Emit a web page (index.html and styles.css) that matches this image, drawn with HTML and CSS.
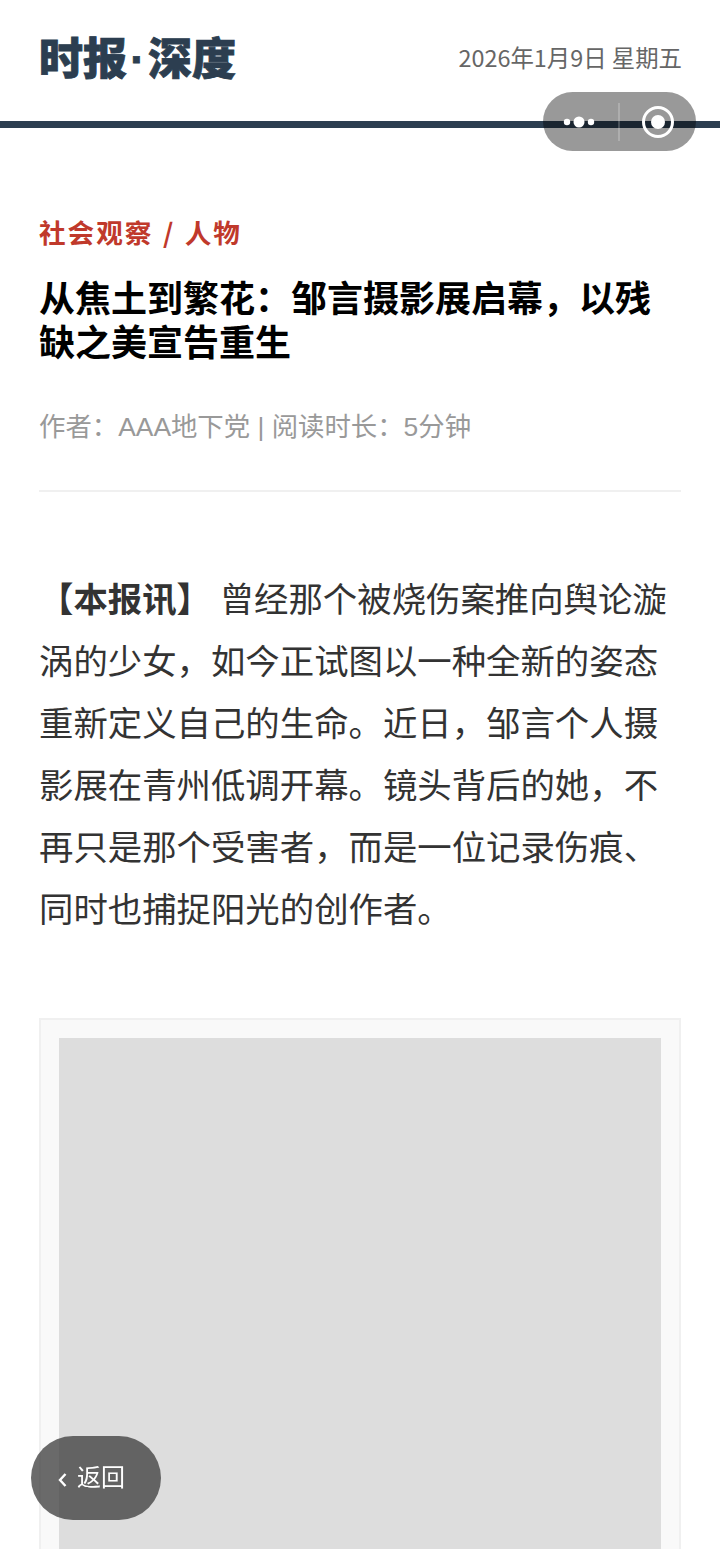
FILE: index.html
```html
<!DOCTYPE html>
<html lang="zh-CN">
<head>
<meta charset="utf-8">
<title>时报·深度</title>
<link rel="stylesheet" href="styles.css">
</head>
<body>
<div class="page">
  <header class="masthead">
    <h1 class="brand">时报<span class="brand-dot">·</span>深度</h1>
    <span class="date">2026年1月9日 星期五</span>
  </header>
  <main class="article">
    <div class="kicker">社会观察 / 人物</div>
    <h2 class="headline">从焦土到繁花&#xFF1A;邹言摄影展启幕&#xFF0C;以残缺之美宣告重生</h2>
    <div class="meta">作者&#xFF1A;AAA地下党 | 阅读时长&#xFF1A;5分钟</div>
    <p class="lead"><strong>【本报讯】</strong> 曾经那个被烧伤案推向舆论漩涡的少女&#xFF0C;如今正试图以一种全新的姿态重新定义自己的生命。近日&#xFF0C;邹言个人摄影展在青州低调开幕。镜头背后的她&#xFF0C;不再只是那个受害者&#xFF0C;而是一位记录伤痕、同时也捕捉阳光的创作者。</p>
    <figure class="photo-card"><div class="photo"></div></figure>
  </main>
</div>
<div class="capsule">
  <svg class="cap-more" width="36" height="12" viewBox="0 0 36 12"><circle cx="5" cy="6" r="3.2" fill="#fff"/><circle cx="17" cy="6" r="5.5" fill="#fff"/><circle cx="29" cy="6" r="3.2" fill="#fff"/></svg>
  <span class="cap-sep"></span>
  <svg class="cap-target" width="34" height="34" viewBox="0 0 34 34"><circle cx="17" cy="17" r="14.5" fill="none" stroke="#fff" stroke-width="3"/><circle cx="17" cy="17" r="7" fill="#fff"/></svg>
</div>
<a class="back"><svg class="back-chev" width="9" height="14" viewBox="0 0 9 14"><path d="M7.5 1 L2 7 L7.5 13" fill="none" stroke="#fff" stroke-width="2.4"/></svg><span class="back-label">返回</span></a>
</body>
</html>
```
FILE: styles.css
```css
* { box-sizing: border-box; }
html, body { margin: 0; padding: 0; background: #fff; overflow: hidden; height: 100%; }
body { font-family: "Noto Sans CJK SC", sans-serif; color: #333; }
.page { height: 1549px; overflow: hidden; }
.masthead {
  display: flex; justify-content: space-between; align-items: center;
  height: 128px; padding: 0 38px 7px 39px; border-bottom: 7px solid #2c3e50;
}
.brand { margin: 2px 0 0; font-size: 44px; line-height: 56px; font-weight: 900; color: #2c3e50; -webkit-text-stroke: 0.8px #2c3e50; }
.brand-dot { font-family: "Liberation Sans", sans-serif; padding: 0 3.2px; }
.date { font-size: 23.4px; color: #666; }
.article { padding: 87px 39px 0 39px; }
.kicker { font-size: 26.6px; line-height: 34px; font-weight: 700; color: #c0392b; letter-spacing: 2px; word-spacing: 1.5px; }
.headline { margin: 25px 0 0; font-size: 36px; line-height: 44px; font-weight: 700; color: #000; }
.meta { margin-top: 45px; padding-bottom: 43px; border-bottom: 2px solid #f0f0f0; font-family: "Liberation Sans", "Noto Sans CJK SC", sans-serif; font-size: 26.4px; line-height: 40px; color: #999; }
.lead { margin: 74px 0 0; font-size: 34.4px; line-height: 62px; color: #333; }
.lead strong { font-weight: 700; margin-right: 1px; }
.photo-card { margin: 80px 0 0; padding: 18px; height: 900px; background: #f9f9f9; border: 2px solid #f0f0f0; }
.photo { height: 100%; background: #ddd; }
.capsule {
  position: fixed; left: 543px; top: 92px; width: 153px; height: 59px;
  display: flex; align-items: center; border-radius: 30px; background: rgba(0,0,0,.4);
}
.cap-more { margin-left: 19px; }
.cap-sep { width: 2px; height: 38px; margin-left: 20px; background: rgba(255,255,255,.2); }
.cap-target { margin-left: 21px; }
.back {
  position: fixed; left: 31px; top: 1436px; width: 130px; height: 84px;
  display: flex; align-items: center; gap: 10px; padding-left: 27px;
  border-radius: 42px; background: rgba(58,58,58,.75); color: #fff; font-size: 24px;
}
.back-chev { position: relative; top: 2px; }
.back-label { position: relative; top: -3px; }
```
